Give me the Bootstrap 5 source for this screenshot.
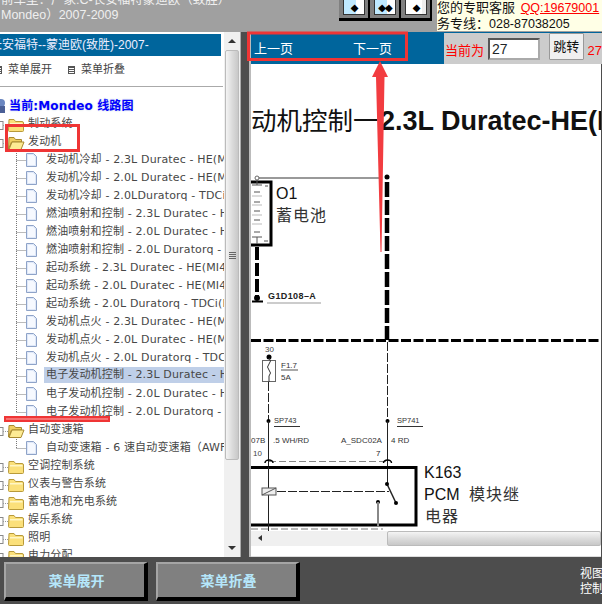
<!doctype html>
<html lang="en">

<head>
    <meta charset="utf-8">
    <meta name="viewport" content="width=device-width, initial-scale=1">
    <title>线路图</title>
    <link href="https://cdn.jsdelivr.net/npm/bootstrap@5.3.3/dist/css/bootstrap.min.css" rel="stylesheet">
    <style>
        body {
            width: 602px;
            height: 604px;
            overflow: hidden;
            background-color: #4d4d4d;
            font-family: "DejaVu Sans", "Noto Sans CJK SC", sans-serif;
            font-size: 11px;
            position: relative;
        }

        .topBar {
            height: 32px;
            background-color: #a0a0a0;
        }

        .carTitle {
            width: 339px;
            margin-top: -7px;
            padding-left: 1px;
            color: #efefef;
            font-family: "Liberation Sans", "Noto Sans CJK SC", sans-serif;
            font-size: 12.5px;
            line-height: 15px;
            white-space: nowrap;
        }

        .viewBtn {
            width: 31px;
            height: 21px;
            padding: 0 3px 3px 4px;
            background-color: #808080;
            border-right: 2px solid #000;
            border-bottom: 3px solid #000;
        }

        .viewBtnFace {
            height: 100%;
            border: 1px solid #333;
            border-top: 0;
            background: linear-gradient(90deg, #bfe9ff 62%, #fff 62%);
            font-size: 10px;
            color: #000;
            line-height: 15px;
            letter-spacing: -1px;
        }

        .viewBtnFace.whiteFace {
            background: linear-gradient(90deg, #fff 80%, #eee 80%);
        }

        .serviceBox {
            margin-left: 5px;
            width: 165px;
            height: 31px;
            background-color: #ffffe6;
            color: #111;
            font-family: "Liberation Sans", "Noto Sans CJK SC", sans-serif;
            font-size: 13px;
            line-height: 16px;
            white-space: nowrap;
            overflow: hidden;
        }

        .serviceBox a {
            color: #f00;
            margin-left: 2px;
            font-size: 12.5px;
        }

        .serviceNum {
            font-size: 12.5px;
        }

        .mainArea {
            height: 525px;
        }

        .menuPanel {
            width: 241px;
            background-color: #fff;
            border-right: 1px solid #aaa;
        }

        .menuCol {
            width: 224px;
            overflow: hidden;
            padding-top: 2px;
        }

        .menuTitle {
            height: 22px;
            margin-left: -10px;
            margin-right: 3px;
            background-color: #00659c;
            color: #eef;
            font-size: 12px;
            line-height: 22px;
            font-family: "Liberation Sans", "Noto Sans CJK SC", sans-serif;
            white-space: nowrap;
        }

        .menuTools {
            height: 31px;
            margin-right: 1px;
            padding-bottom: 2px;
            border-bottom: 1px solid #aaa;
            color: #444;
            font-size: 11px;
            line-height: 26px;
        }

        .toolIcon {
            width: 7px;
            height: 8px;
            border: 1px solid #555;
            background: repeating-linear-gradient(#555 0 1px, #fff 1px 2px);
        }

        .toolIcon.firstTool {
            margin-left: -5px;
        }

        .toolIcon.secondTool {
            margin-left: 16px;
        }

        .toolLabel {
            margin-left: 6px;
        }

        .treeList {
            padding-top: 10px;
            letter-spacing: .15px;
        }

        .treeRow {
            height: 18px;
            line-height: 18px;
            color: #474747;
            white-space: nowrap;
            position: relative;
        }

        .treeRow.currentRow {
            padding-left: 9px;
            color: #00f;
            font-size: 12px;
            font-weight: 700;
            text-shadow: 0 0 2px #bcd;
        }

        .treeRow.folderRow {
            padding-left: 28px;
        }

        .treeRow.fileRow {
            padding-left: 46px;
        }

        .treeRow svg {
            position: absolute;
            left: 0;
            top: 0;
        }

        .rowText {
            display: inline-block;
            height: 16px;
            line-height: 16px;
            padding: 0 2px 0 0;
        }

        .rowText.selected {
            display: block;
            margin-left: -2px;
            padding-left: 2px;
            background-color: #bfcfe8;
        }

        .scrollV {
            width: 16px;
            background-color: #f0f0f0;
        }

        .arrowUp,
        .arrowDown {
            width: 0;
            height: 0;
            margin: 0 auto;
            border-left: 4px solid transparent;
            border-right: 4px solid transparent;
        }

        .arrowUp {
            margin-top: 7px;
            border-bottom: 4px solid #333;
        }

        .arrowDown {
            margin-bottom: 7px;
            border-top: 4px solid #333;
        }

        .thumbV {
            height: 410px;
            margin: 7px 1px 0;
            border: 1px solid #bbb;
            border-radius: 2px;
            background: linear-gradient(90deg, #f4f4f4, #dcdcdc 50%, #c8c8c8);
        }

        .gripLines {
            width: 7px;
            height: 7px;
            background: repeating-linear-gradient(#666 0 1px, transparent 1px 2px);
        }

        .viewPanel {
            width: 352px;
            margin-left: 8px;
            background-color: #fff;
            border-left: 2px solid #bbb;
        }

        .pageBar {
            height: 32px;
            background-color: #00659c;
            color: #fff;
            font-family: "Liberation Sans", "Noto Sans CJK SC", sans-serif;
            font-size: 13px;
        }

        .pageLink {
            padding-left: 3px;
            padding-top: 2px;
        }

        .pageLink.prevLink {
            width: 99px;
        }

        .pageLink.nextLink {
            width: 94px;
        }

        .jumpBox {
            width: 158px;
            height: 31px;
            margin-top: 1px;
            background-color: #ccc;
            color: #f00;
            white-space: nowrap;
            overflow: hidden;
            padding-left: 1px;
        }

        .jumpLabel {
            padding-top: 5px;
        }

        .jumpInput {
            width: 52px;
            height: 22px;
            margin-left: 4px;
            margin-top: 1px;
            padding: 0 2px;
            font-size: 14px;
            line-height: 18px;
            border: 2px inset #aaa;
            border-radius: 0;
        }

        .jumpBtn {
            width: 37px;
            height: 27px;
            margin-left: 9px;
            margin-top: -4px;
            padding: 0;
            font-size: 13px;
            color: #111;
            background-color: #f0f0f0;
            border: 1px solid #999;
            border-radius: 1px;
        }

        .diagramWrap {
            height: 467px;
            overflow: hidden;
        }

        .diagramWrap svg {
            display: block;
        }

        .scrollH {
            height: 15px;
            background-color: #f0f0f0;
        }

        .arrowLeft {
            width: 0;
            height: 0;
            margin: 4px 0 0 7px;
            border-top: 3px solid transparent;
            border-bottom: 3px solid transparent;
            border-right: 4px solid #333;
        }

        .thumbH {
            margin-left: 125px;
            flex: 1;
            border: 1px solid #bbb;
            border-radius: 2px;
            background: linear-gradient(#f4f4f4, #dcdcdc 50%, #c8c8c8);
        }

        .scrollGap {
            height: 11px;
            border-bottom: 1px solid #ddd;
        }

        .bottomBar {
            height: 47px;
            padding: 5px 0 0 4px;
        }

        .menuBtn {
            width: 144px;
            height: 39px;
            padding: 0 0 0 3px;
            margin-right: 8px;
            border-radius: 0;
            border-style: solid;
            border-width: 2px 4px 4px 2px;
            border-color: #a5a5a5 #000 #000 #a5a5a5;
            background-color: #808080;
            color: #b5e6fa;
            font-family: "Noto Sans CJK SC", sans-serif;
            font-size: 14px;
            font-weight: 700;
        }

        .menuBtn:hover {
            background-color: #808080;
            color: #b5e6fa;
        }

        .viewLabel {
            margin-left: auto;
            width: 22px;
            overflow: hidden;
            padding-top: 3px;
            color: #fff;
            font-family: "Noto Sans CJK SC", sans-serif;
            font-size: 12px;
            line-height: 15px;
            white-space: nowrap;
        }

        .markLayer {
            position: absolute;
            left: 0;
            top: 0;
            pointer-events: none;
        }
    </style>
</head>

<body>
    <div class="topBar d-flex overflow-hidden">
        <div class="carTitle overflow-hidden">
            <div>前车型：厂家:C-长安福特蒙迪欧（致胜）</div>
            <div>Mondeo）2007-2009</div>
        </div>
        <div class="d-flex">
            <div class="viewBtn"><div class="viewBtnFace text-center">◆</div></div>
            <div class="viewBtn"><div class="viewBtnFace text-center">◆◆</div></div>
            <div class="viewBtn"><div class="viewBtnFace whiteFace text-center">◆</div></div>
        </div>
        <div class="serviceBox">
            <div>您的专职客服 <a href="#">QQ:19679001</a></div>
            <div>务专线：<span class="serviceNum">028-87038205</span></div>
        </div>
    </div>

    <div class="mainArea d-flex">
        <div class="menuPanel d-flex">
            <div class="menuCol">
                <div class="menuTitle">长安福特--蒙迪欧(致胜)-2007-</div>
                <div class="menuTools d-flex align-items-center">
                    <span class="toolIcon firstTool"></span>
                    <span class="toolLabel">菜单展开</span>
                    <span class="toolIcon secondTool"></span>
                    <span class="toolLabel">菜单折叠</span>
                </div>
                <div class="treeList" id="treeList"></div>
            </div>
            <div class="scrollV d-flex flex-column">
                <div class="arrowUp"></div>
                <div class="thumbV d-flex align-items-center justify-content-center"><div class="gripLines"></div></div>
                <div class="arrowDown mt-auto"></div>
            </div>
        </div>

        <div class="viewPanel d-flex flex-column">
            <div class="pageBar d-flex align-items-center">
                <div class="pageLink prevLink flex-shrink-0">上一页</div>
                <div class="pageLink nextLink flex-shrink-0">下一页</div>
                <div class="jumpBox flex-shrink-0 d-flex align-items-center">
                    <span class="jumpLabel">当前为</span>
                    <input class="jumpInput form-control" value="27">
                    <button class="jumpBtn btn">跳转</button>
                    <span class="jumpLabel ms-1">27</span>
                </div>
            </div>
            <div class="diagramWrap">
                <svg width="350" height="467" viewBox="252 64 350 467" xmlns="http://www.w3.org/2000/svg" font-family="Liberation Sans, Noto Sans CJK SC, sans-serif">
                    <text x="252" y="130" font-size="25.500" fill="#111" font-family="Noto Sans CJK SC, sans-serif">动机控制一</text>
                    <text x="381" y="130" font-size="27" font-weight="700" fill="#111">2.3L Duratec-HE(M</text>

                    <!-- battery -->
                    <line x1="258" y1="178" x2="381" y2="178" stroke="#999" stroke-width="2" />
                    <circle cx="258" cy="178" r="2" fill="#fff" stroke="#666" />
                    <rect x="240" y="182" width="32" height="63" fill="#fff" stroke="#000" stroke-width="3" />
                    <g stroke="#555">
                        <line x1="258" y1="180" x2="258" y2="185" />
                        <line x1="253" y1="185" x2="263" y2="185" />
                        <line x1="255" y1="192" x2="261" y2="192" />
                        <line x1="253" y1="196" x2="263" y2="196" stroke="#bbb" />
                        <line x1="255" y1="202" x2="261" y2="202" />
                        <line x1="253" y1="205" x2="263" y2="205" stroke="#bbb" />
                        <line x1="255" y1="211" x2="261" y2="211" />
                        <line x1="253" y1="215" x2="263" y2="215" stroke="#bbb" />
                        <line x1="255" y1="220" x2="261" y2="220" />
                        <line x1="253" y1="224" x2="263" y2="224" stroke="#bbb" />
                        <line x1="255" y1="232" x2="261" y2="232" />
                        <line x1="253" y1="237" x2="263" y2="237" />
                        <line x1="258" y1="237" x2="258" y2="244" />
                        <line x1="265" y1="241" x2="269" y2="241" />
                        <line x1="266" y1="186" x2="269" y2="186" />
                    </g>
                    <text x="277" y="199" font-size="16" fill="#111">O1</text>
                    <text x="277" y="221" font-size="16" fill="#333" font-family="Noto Sans CJK SC, sans-serif" letter-spacing="1">蓄电池</text>
                    <line x1="258" y1="247" x2="258" y2="297" stroke="#000" stroke-width="4" stroke-dasharray="13 3" />
                    <circle cx="258" cy="298" r="3" fill="#000" />
                    <line x1="253" y1="301.500" x2="264" y2="301.500" stroke="#000" stroke-width="2" />
                    <text x="269" y="299" font-size="9" font-weight="700" fill="#222" letter-spacing=".4">G1D108–A</text>
                    <line x1="268" y1="303" x2="322" y2="303" stroke="#999" />

                    <!-- power rails -->
                    <circle cx="388" cy="177" r="2.500" fill="#000" />
                    <line x1="388" y1="182" x2="388" y2="340" stroke="#000" stroke-width="4.500" stroke-dasharray="15 3" />
                    <line x1="252" y1="340.500" x2="602" y2="340.500" stroke="#000" stroke-width="3" stroke-dasharray="10 2.500" />
                    <line x1="388.500" y1="342" x2="388.500" y2="421" stroke="#222" stroke-dasharray="9 2" />

                    <!-- fuse -->
                    <text x="266" y="352" font-size="8" fill="#444">30</text>
                    <circle cx="270" cy="357" r="2.500" fill="#000" />
                    <rect x="263.500" y="360.500" width="13" height="21" fill="#fff" stroke="#666" />
                    <path d="M270 358 q3 3 0 6 q-3 3 0 6 q3 3 0 6 l0 6" fill="none" stroke="#333" />
                    <text x="282" y="368" font-size="8" fill="#333">F1.7</text>
                    <line x1="282" y1="370" x2="299" y2="370" stroke="#555" />
                    <text x="282" y="380" font-size="8" fill="#333">5A</text>
                    <line x1="269.500" y1="382" x2="269.500" y2="421" stroke="#222" stroke-dasharray="9 2" />

                    <!-- splices -->
                    <circle cx="269.500" cy="421" r="2" fill="#000" />
                    <circle cx="388.500" cy="421" r="2" fill="#000" />
                    <text x="275" y="423" font-size="7.500" fill="#333">SP743</text>
                    <line x1="275" y1="426.500" x2="301" y2="426.500" stroke="#333" />
                    <text x="398" y="423" font-size="7.500" fill="#333">SP741</text>
                    <line x1="398" y1="426.500" x2="424" y2="426.500" stroke="#333" />
                    <line x1="269.500" y1="421" x2="269.500" y2="531" stroke="#222" />
                    <line x1="388.500" y1="421" x2="388.500" y2="484" stroke="#222" />
                    <text x="252" y="443" font-size="8" fill="#333">07B</text>
                    <text x="274" y="443" font-size="8" fill="#333">.5 WH/RD</text>
                    <text x="342" y="443" font-size="8" fill="#333">A_SDC02A</text>
                    <text x="392" y="443" font-size="8" fill="#333">4 RD</text>
                    <text x="254" y="456" font-size="8" fill="#444">10</text>
                    <text x="377" y="456" font-size="8" fill="#222">7</text>
                    <line x1="270" y1="461.500" x2="388" y2="461.500" stroke="#888" stroke-dasharray="7 3" />
                    <path d="M266 463 a4 3 0 0 1 8 0" fill="none" stroke="#000" stroke-width="1.500" />
                    <path d="M384.500 463 a4 3 0 0 1 8 0" fill="none" stroke="#000" stroke-width="1.500" />

                    <!-- K163 relay -->
                    <rect x="240" y="467.500" width="177" height="57.500" fill="none" stroke="#000" stroke-width="3" />
                    <line x1="269.500" y1="467" x2="269.500" y2="531" stroke="#222" />
                    <rect x="263" y="488" width="14" height="7" fill="#eee" stroke="#555" />
                    <line x1="263" y1="495" x2="277" y2="488" stroke="#555" />
                    <line x1="278" y1="491.500" x2="390" y2="491.500" stroke="#222" stroke-dasharray="9 2" />
                    <line x1="388" y1="484" x2="397" y2="503" stroke="#222" stroke-width="1.500" />
                    <circle cx="388" cy="484" r="2" fill="#000" />
                    <circle cx="397" cy="503" r="2" fill="#000" />
                    <circle cx="379" cy="502" r="2" fill="#000" />
                    <line x1="379" y1="502" x2="379" y2="526" stroke="#888" stroke-width="2" />
                    <line x1="252" y1="529" x2="384" y2="529" stroke="#777" stroke-dasharray="7 3" />
                    <text x="425" y="478" font-size="16" fill="#111">K163</text>
                    <text x="425" y="500" font-size="16" fill="#111">PCM</text>
                    <text x="470" y="500" font-size="16" fill="#333" font-family="Noto Sans CJK SC, sans-serif" letter-spacing="1">模块继</text>
                    <text x="426" y="522" font-size="16" fill="#333" font-family="Noto Sans CJK SC, sans-serif" letter-spacing="1">电器</text>
                </svg>
            </div>
            <div class="scrollH d-flex">
                <div class="arrowLeft"></div>
                <div class="thumbH"></div>
            </div>
            <div class="scrollGap"></div>
        </div>
    </div>

    <div class="bottomBar d-flex">
        <button class="menuBtn btn">菜单展开</button>
        <button class="menuBtn btn">菜单折叠</button>
        <div class="viewLabel">视图<br>控制</div>
    </div>

    <!-- red marks drawn over the screenshot -->
    <svg class="markLayer" width="602" height="604" xmlns="http://www.w3.org/2000/svg">
        <rect x="248.500" y="33" width="158" height="26.500" fill="none" stroke="#ef3535" stroke-width="3" />
        <rect x="6.500" y="125.500" width="72" height="25" fill="none" stroke="#ef3535" stroke-width="3" />
        <rect x="4" y="416" width="106" height="6" fill="#ef3535" />
        <line x1="6" y1="419" x2="108" y2="419" stroke="#ffb0b0" />
        <polygon points="380,61 388,77 384.500,77 381.500,252 380.500,252 376,77 372,77" fill="#f23c40" />
    </svg>

    <script src="https://cdn.jsdelivr.net/npm/bootstrap@5.3.3/dist/js/bootstrap.bundle.min.js"></script>
    <script>
        const folderIcon = `<path d="M9 4.500h5l1.500 2h6.500a1.500 1.500 0 0 1 1.500 1.500v7.500a1 1 0 0 1-1 1h-13a1 1 0 0 1-1-1z" fill="#fbe07a" stroke="#b89a3a"/><path d="M10 8h12.500v1.500h-12.500z" fill="#fff6c4"/>`;
        const openFolderIcon = `<path d="M9 4.500h5l1.500 2h6v2.500h-10l-3 7z" fill="#f0cf62" stroke="#a88a30"/><path d="M12 9h12l-3 7.500h-12z" fill="#fdeb94" stroke="#a88a30"/>`;
        const plusBox = `<rect x="-5" y="6.500" width="8" height="8" fill="#fff" stroke="#888"/><path d="M3 10.500h6" stroke="#999" stroke-dasharray="1 1"/>`;
        const fileIcon = `<path d="M26.500 2.500h7l3 3v10h-10z" fill="#dfe8f8" stroke="#8ea3c8"/><path d="M28 4h5l2 2v8h-7z" fill="#f6f9ff"/>`;

        const engineRows = [
            "发动机冷却 - 2.3L Duratec - HE(MI4)",
            "发动机冷却 - 2.0L Duratec - HE(MI4)",
            "发动机冷却 - 2.0LDuratorq - TDCi(DW)",
            "燃油喷射和控制 - 2.3L Duratec - HE",
            "燃油喷射和控制 - 2.0L Duratec - HE",
            "燃油喷射和控制 - 2.0L Duratorq - TD",
            "起动系统 - 2.3L Duratec - HE(MI4)",
            "起动系统 - 2.0L Duratec - HE(MI4)",
            "起动系统 - 2.0L Duratorq - TDCi(DW)",
            "发动机点火 - 2.3L Duratec - HE(MI4)",
            "发动机点火 - 2.0L Duratec - HE(MI4)",
            "发动机点火 - 2.0L Duratorq - TDCi(DW)",
            "电子发动机控制 - 2.3L Duratec - HE",
            "电子发动机控制 - 2.0L Duratec - HE",
            "电子发动机控制 - 2.0L Duratorq - TD"
        ];

        const folderRow = (name, open) => `
            <div class="treeRow folderRow"><svg width="30" height="18">${plusBox}${open ? openFolderIcon : folderIcon}</svg>${name}</div>`;

        const fileRow = (name, selected, last) => `
            <div class="treeRow fileRow">
                <svg width="40" height="18"><path d="M16.500 0v${last ? 9 : 18}M16.500 9.500h9" stroke="#777" stroke-dasharray="1 1" fill="none"/>${fileIcon}</svg>
                <span class="rowText ${selected ? "selected" : ""}">${name}</span>
            </div>`;

        let html = `<div class="treeRow currentRow"><svg width="8" height="18"><circle cx="1" cy="6" r="4" fill="#6a86c0"/><rect x="-3" y="9" width="8" height="7" fill="#4a5f96"/></svg>当前:Mondeo 线路图</div>`;
        html += folderRow("制动系统");
        html += folderRow("发动机", true);
        engineRows.forEach((name, i) => {
            html += fileRow(name, i === 12, i === engineRows.length - 1);
        });
        html += folderRow("自动变速箱", true);
        html += fileRow("自动变速箱 - 6 速自动变速箱（AWF21）", false, true);
        ["空调控制系统", "仪表与警告系统", "蓄电池和充电系统", "娱乐系统", "照明", "电力分配"].forEach(name => {
            html += folderRow(name);
        });
        document.getElementById("treeList").innerHTML = html;
    </script>
</body>

</html>
